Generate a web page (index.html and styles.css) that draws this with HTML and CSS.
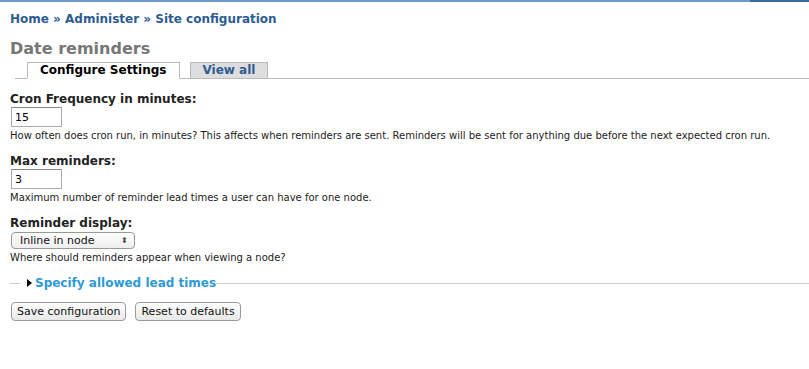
FILE: index.html
```html
<!DOCTYPE html>
<html lang="en">
<head>
  <meta charset="UTF-8" />
  <title>Date reminders | Site configuration</title>
  <link rel="stylesheet" href="styles.css">
</head>
<body>
  <div class="top-bar"></div>
  <main class="content">
    <div class="breadcrumb">
      <a href="#">Home</a> » <a href="#">Administer</a> » <a href="#">Site configuration</a>
    </div>
    <h2 class="page-title">Date reminders</h2>

    <ul class="tabs">
      <li class="active"><a href="#">Configure Settings</a></li>
      <li><a href="#">View all</a></li>
    </ul>

    <form class="settings-form">
      <div class="form-item">
        <label for="cron">Cron Frequency in minutes:</label>
        <input type="text" id="cron" class="form-text" value="15" />
        <div class="description">How often does cron run, in minutes? This affects when reminders are sent. Reminders will be sent for anything due before the next expected cron run.</div>
      </div>

      <div class="form-item">
        <label for="max">Max reminders:</label>
        <input type="text" id="max" class="form-text" value="3" />
        <div class="description">Maximum number of reminder lead times a user can have for one node.</div>
      </div>

      <div class="form-item">
        <label for="display">Reminder display:</label>
        <div class="select">
          <span>Inline in node</span>
          <span class="arrows">⬍</span>
        </div>
        <div class="description">Where should reminders appear when viewing a node?</div>
      </div>

      <div class="fieldset">
        <span class="line short"></span>
        <span class="triangle"></span>
        <a href="#" class="legend">Specify allowed lead times</a>
        <span class="line"></span>
      </div>

      <div class="buttons">
        <button type="button" class="form-submit">Save configuration</button>
        <button type="button" class="form-submit">Reset to defaults</button>
      </div>
    </form>
  </main>
</body>
</html>
```

FILE: styles.css
```css
body {
  font-family: "DejaVu Sans", Verdana, sans-serif;
  background-color: #fff;
  color: #222;
  margin: 0;
  padding: 0;
}

.top-bar {
  height: 2px;
  background: linear-gradient(to right, #6f9bcb 0, #6f9bcb 750px, #3a6aa0 750px);
}

.content {
  padding: 0 0 0 10px;
}

.breadcrumb {
  margin-top: 10px;
  font-size: 12px;
  font-weight: bold;
  color: #2d5c93;
}

.breadcrumb a {
  color: #2d5c93;
  text-decoration: none;
}

.page-title {
  margin: 13px 0 0;
  font-size: 16px;
  font-weight: bold;
  color: #777;
  line-height: 20px;
}

.tabs {
  list-style: none;
  margin: 3px 0 0 5px;
  padding: 0 0 0 12px;
  display: flex;
  gap: 10px;
  border-bottom: 1px solid #bbb;
  height: 16px;
}

.tabs li {
  border: 1px solid #bbb;
  background: #ddd;
  height: 15px;
  margin-bottom: -1px;
}

.tabs li.active {
  background: #fff;
  border-bottom-color: #fff;
}

.tabs li a {
  display: block;
  padding: 0 12px;
  font-size: 12px;
  font-weight: bold;
  line-height: 15px;
  color: #2d5c93;
  text-decoration: none;
}

.tabs li.active a {
  color: #000;
}

.settings-form {
  margin-top: 13px;
}

.form-item {
  margin-bottom: 13px;
}

.form-item label {
  display: block;
  font-size: 12px;
  font-weight: bold;
  color: #222;
  margin-bottom: 1px;
}

.form-text {
  display: block;
  width: 51px;
  height: 20px;
  box-sizing: border-box;
  margin: 0 0 0 1px;
  padding: 1px 3px 0;
  border: 1px solid #aaa;
  border-top-color: #888;
  font-family: inherit;
  font-size: 11px;
  color: #000;
}

.description {
  font-size: 10px;
  color: #222;
  margin-top: 3px;
}

.select {
  display: flex;
  justify-content: space-between;
  align-items: center;
  width: 124px;
  height: 17px;
  box-sizing: border-box;
  margin: 2px 0 2px 1px;
  padding: 0 6px 0 8px;
  border: 1px solid #999;
  border-radius: 4px;
  background: linear-gradient(#fff, #eee);
  font-size: 11px;
  color: #111;
}

.select .arrows {
  font-size: 8px;
  color: #444;
}

.fieldset {
  display: flex;
  align-items: center;
  margin-top: 5px;
}

.fieldset .line {
  flex: 1;
  height: 1px;
  background: #ccc;
  margin-top: 1px;
}

.fieldset .line.short {
  flex: 0 0 10px;
  margin-right: 7px;
}

.fieldset .triangle {
  width: 0;
  height: 0;
  border-top: 4px solid transparent;
  border-bottom: 4px solid transparent;
  border-left: 5px solid #000;
  margin-right: 3px;
}

.fieldset .legend {
  font-size: 12px;
  font-weight: bold;
  color: #2e9ad6;
  text-decoration: none;
}

.buttons {
  display: flex;
  gap: 9px;
  margin-top: 12px;
  margin-left: 1px;
}

.form-submit {
  font-family: inherit;
  font-size: 11px;
  height: 19px;
  padding: 0 5px;
  border: 1px solid #999;
  border-radius: 4px;
  background: linear-gradient(#fff, #e8e8e8);
  color: #111;
  cursor: pointer;
}
```
